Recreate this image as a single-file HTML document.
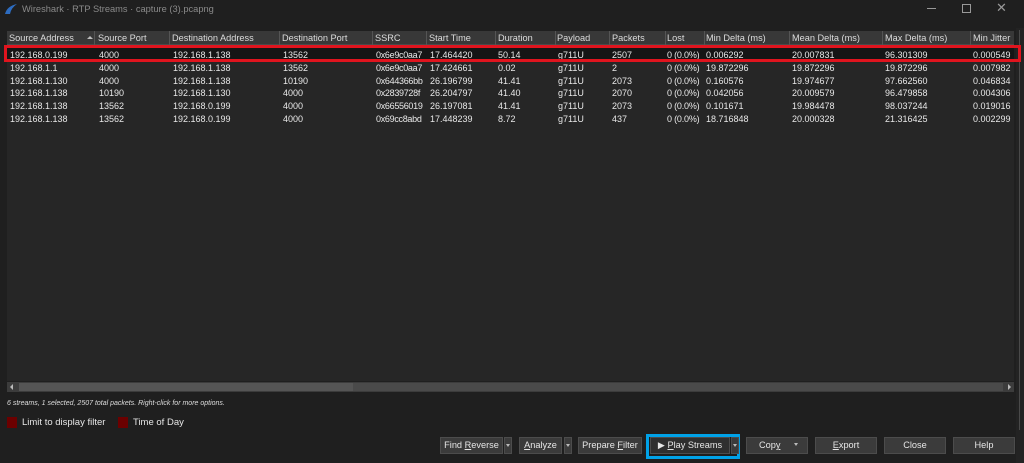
<!DOCTYPE html>
<html><head><style>
*{margin:0;padding:0;box-sizing:border-box}
body{width:1024px;height:463px;background:#1f1f1f;font-family:"Liberation Sans",sans-serif;color:#e6e6e6;position:relative;overflow:hidden;font-size:9px}
.abs{position:absolute;white-space:nowrap}
#title{left:0;top:0;width:1024px;height:28px;background:#1f1f1f}
#tbl{left:7px;top:31px;width:1007px;height:350px;background:#262626}
#hdr{left:7px;top:31px;width:1007px;height:14px;background:#383838;border-bottom:1px solid #4a4a4a}
.h{top:33px;font-size:9.2px;color:#ddd}
.sep{top:31px;width:1px;height:14px;background:#555}
.c{font-size:9px;color:#e8e8e8}
.btn{top:437px;height:17px;background:#3b3b3b;border:1px solid #4c4c4c;font-size:9.2px;color:#e6e6e6;text-align:center;line-height:15px}
.dd{top:437px;height:17px;width:8px;background:#3b3b3b;border:1px solid #4c4c4c}
.dd:after{content:"";position:absolute;left:1px;top:6px;border:2.5px solid transparent;border-top:3px solid #bbb}
</style></head><body>
<div class="abs" id="title"></div>
<svg class="abs" style="left:4px;top:3px" width="14" height="12" viewBox="0 0 14 12"><path d="M1 11 Q3 3 13 1 Q7 5 6 11Z" fill="#2d6cc0"/></svg>
<div class="abs" style="left:22px;top:4px;font-size:9.3px;color:#8a8a8a">Wireshark · RTP Streams · capture (3).pcapng</div>
<div class="abs" style="left:927px;top:8px;width:9px;height:1px;background:#999"></div>
<div class="abs" style="left:962px;top:4px;width:9px;height:9px;border:1px solid #999"></div>
<div class="abs" style="left:996px;top:0px;font-size:13px;color:#999">✕</div>
<div class="abs" style="left:1016px;top:28px;width:8px;height:435px;background:#232323"></div>
<div class="abs" style="left:1019px;top:30px;width:1px;height:400px;background:#4a4a4a"></div>

<div class="abs" id="tbl"></div>
<div class="abs" id="hdr"></div>
<div class="abs sep" style="left:94px"></div><div class="abs sep" style="left:169px"></div><div class="abs sep" style="left:279px"></div><div class="abs sep" style="left:372px"></div><div class="abs sep" style="left:426px"></div><div class="abs sep" style="left:495px"></div><div class="abs sep" style="left:555px"></div><div class="abs sep" style="left:609px"></div><div class="abs sep" style="left:665px"></div><div class="abs sep" style="left:704px"></div><div class="abs sep" style="left:789px"></div><div class="abs sep" style="left:882px"></div><div class="abs sep" style="left:970px"></div>
<div class="abs h" style="left:9px">Source Address</div>
<div class="abs" style="left:87px;top:36px;border:3px solid transparent;border-bottom:3px solid #bbb;border-top:0"></div>
<div class="abs h" style="left:98px">Source Port</div>
<div class="abs h" style="left:172px">Destination Address</div>
<div class="abs h" style="left:282px">Destination Port</div>
<div class="abs h" style="left:375px">SSRC</div>
<div class="abs h" style="left:429px">Start Time</div>
<div class="abs h" style="left:498px">Duration</div>
<div class="abs h" style="left:557px">Payload</div>
<div class="abs h" style="left:612px">Packets</div>
<div class="abs h" style="left:667px">Lost</div>
<div class="abs h" style="left:706px">Min Delta (ms)</div>
<div class="abs h" style="left:792px">Mean Delta (ms)</div>
<div class="abs h" style="left:885px">Max Delta (ms)</div>
<div class="abs h" style="left:973px">Min Jitter</div>

<div class="abs" style="left:7px;top:46px;width:1007px;height:14px;background:#151515"></div>

<div class="abs c" style="left:10px;top:49px;line-height:12.8px">192.168.0.199<br>192.168.1.1<br>192.168.1.130<br>192.168.1.138<br>192.168.1.138<br>192.168.1.138</div>
<div class="abs c" style="left:99px;top:49px;line-height:12.8px">4000<br>4000<br>4000<br>10190<br>13562<br>13562</div>
<div class="abs c" style="left:173px;top:49px;line-height:12.8px">192.168.1.138<br>192.168.1.138<br>192.168.1.138<br>192.168.1.130<br>192.168.0.199<br>192.168.0.199</div>
<div class="abs c" style="left:283px;top:49px;line-height:12.8px">13562<br>13562<br>10190<br>4000<br>4000<br>4000</div>
<div class="abs c" style="left:376px;top:49px;line-height:12.8px;letter-spacing:-0.3px">0x6e9c0aa7<br>0x6e9c0aa7<br>0x644366bb<br>0x2839728f<br>0x66556019<br>0x69cc8abd</div>
<div class="abs c" style="left:430px;top:49px;line-height:12.8px">17.464420<br>17.424661<br>26.196799<br>26.204797<br>26.197081<br>17.448239</div>
<div class="abs c" style="left:498px;top:49px;line-height:12.8px">50.14<br>0.02<br>41.41<br>41.40<br>41.41<br>8.72</div>
<div class="abs c" style="left:558px;top:49px;line-height:12.8px">g711U<br>g711U<br>g711U<br>g711U<br>g711U<br>g711U</div>
<div class="abs c" style="left:612px;top:49px;line-height:12.8px">2507<br>2<br>2073<br>2070<br>2073<br>437</div>
<div class="abs c" style="left:667px;top:49px;line-height:12.8px;letter-spacing:-0.2px">0 (0.0%)<br>0 (0.0%)<br>0 (0.0%)<br>0 (0.0%)<br>0 (0.0%)<br>0 (0.0%)</div>
<div class="abs c" style="left:706px;top:49px;line-height:12.8px">0.006292<br>19.872296<br>0.160576<br>0.042056<br>0.101671<br>18.716848</div>
<div class="abs c" style="left:792px;top:49px;line-height:12.8px">20.007831<br>19.872296<br>19.974677<br>20.009579<br>19.984478<br>20.000328</div>
<div class="abs c" style="left:885px;top:49px;line-height:12.8px">96.301309<br>19.872296<br>97.662560<br>96.479858<br>98.037244<br>21.316425</div>
<div class="abs c" style="left:973px;top:49px;line-height:12.8px">0.000549<br>0.007982<br>0.046834<br>0.004306<br>0.019016<br>0.002299</div>

<div class="abs" style="left:4px;top:45px;width:1017px;height:17px;border:3px solid #e0141e"></div>

<div class="abs" style="left:7px;top:382px;width:1007px;height:10px;background:#3c3c3c"></div>
<div class="abs" style="left:19px;top:383px;width:334px;height:8px;background:#555"></div>
<div class="abs" style="left:353px;top:383px;width:650px;height:8px;background:#4a4a4a"></div>
<div class="abs" style="left:10px;top:384px;border:3px solid transparent;border-right:3px solid #bbb;border-left:0"></div>
<div class="abs" style="left:1008px;top:384px;border:3px solid transparent;border-left:3px solid #bbb;border-right:0"></div>

<div class="abs" style="left:7px;top:400px;font-size:7px;font-style:italic;color:#ddd">6 streams, 1 selected, 2507 total packets. Right-click for more options.</div>
<div class="abs" style="left:7px;top:417px;width:10px;height:11px;background:#6b0000"></div>
<div class="abs" style="left:22px;top:417px;font-size:9.5px">Limit to display filter</div>
<div class="abs" style="left:118px;top:417px;width:10px;height:11px;background:#6b0000"></div>
<div class="abs" style="left:133px;top:417px;font-size:9.5px">Time of Day</div>

<div class="abs btn" style="left:440px;width:63px">Find <u>R</u>everse</div><div class="abs dd" style="left:504px"></div>
<div class="abs btn" style="left:519px;width:43px"><u>A</u>nalyze</div><div class="abs dd" style="left:564px"></div>
<div class="abs btn" style="left:578px;width:64px">Prepare <u>F</u>ilter</div>
<div class="abs" style="left:646px;top:434px;width:94px;height:25px;border:3px solid #00a2e8"></div>
<div class="abs btn" style="left:650px;width:80px;background:#2f2f2f">&#9654; <u>P</u>lay Streams</div><div class="abs dd" style="left:731px"></div>
<div class="abs btn" style="left:746px;width:62px;text-align:left;padding-left:12px">Cop<u>y</u></div><div class="abs" style="left:794px;top:443px;border:2.5px solid transparent;border-top:3px solid #bbb"></div>
<div class="abs btn" style="left:815px;width:62px"><u>E</u>xport</div>
<div class="abs btn" style="left:884px;width:62px">Close</div>
<div class="abs btn" style="left:953px;width:62px">Help</div>
</body></html>
